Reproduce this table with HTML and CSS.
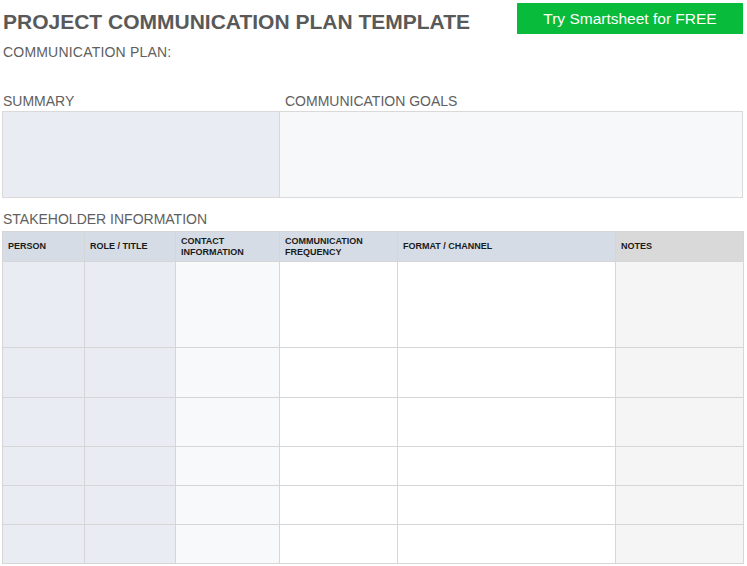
FILE: index.html
```html
<!DOCTYPE html>
<html>
<head>
<meta charset="utf-8">
<link rel="stylesheet" href="styles.css">
</head>
<body>
<div class="page">
  <header class="top">
    <h1 class="title">PROJECT COMMUNICATION PLAN TEMPLATE</h1>
    <a class="cta">Try Smartsheet for FREE</a>
  </header>
  <div class="subtitle">COMMUNICATION PLAN:</div>

  <div class="labels">
    <div class="label">SUMMARY</div>
    <div class="label">COMMUNICATION GOALS</div>
  </div>
  <div class="boxes">
    <div class="box box-summary"></div>
    <div class="box box-goals"></div>
  </div>

  <div class="label stake">STAKEHOLDER INFORMATION</div>
  <table class="grid">
    <colgroup>
      <col class="c1"><col class="c2"><col class="c3"><col class="c4"><col class="c5"><col class="c6">
    </colgroup>
    <thead>
      <tr>
        <th>PERSON</th>
        <th>ROLE / TITLE</th>
        <th>CONTACT<br>INFORMATION</th>
        <th>COMMUNICATION<br>FREQUENCY</th>
        <th>FORMAT / CHANNEL</th>
        <th class="notes-h">NOTES</th>
      </tr>
    </thead>
    <tbody>
      <tr class="r1"><td class="blue"></td><td class="blue"></td><td class="pale"></td><td></td><td></td><td class="notes"></td></tr>
      <tr class="r2"><td class="blue"></td><td class="blue"></td><td class="pale"></td><td></td><td></td><td class="notes"></td></tr>
      <tr class="r3"><td class="blue"></td><td class="blue"></td><td class="pale"></td><td></td><td></td><td class="notes"></td></tr>
      <tr class="r4"><td class="blue"></td><td class="blue"></td><td class="pale"></td><td></td><td></td><td class="notes"></td></tr>
      <tr class="r4"><td class="blue"></td><td class="blue"></td><td class="pale"></td><td></td><td></td><td class="notes"></td></tr>
      <tr class="r4"><td class="blue"></td><td class="blue"></td><td class="pale"></td><td></td><td></td><td class="notes"></td></tr>
    </tbody>
  </table>
</div>
</body>
</html>
```

FILE: styles.css
```css
* { box-sizing: border-box; }
html, body { margin: 0; padding: 0; background: #fff; }
body { font-family: "Liberation Sans", Arial, sans-serif; color: #595959; }
.page { width: 747px; padding: 0 4px 0 2px; }

.top {
  display: flex;
  justify-content: space-between;
  align-items: flex-start;
  height: 38px;
  padding-top: 3px;
}
.title {
  margin: 2px 0 0 0;
  padding-left: 1px;
  font-size: 21px;
  line-height: 33px;
  font-weight: bold;
  color: #595959;
}
.cta {
  display: flex;
  align-items: center;
  justify-content: center;
  width: 226px;
  height: 31px;
  background: #08bb3a;
  color: #fff;
  font-size: 15.5px;
  text-decoration: none;
}
.subtitle {
  margin-top: 6px;
  padding-left: 1px;
  font-size: 14px;
  line-height: 16px;
  color: #606060;
  letter-spacing: 0.2px;
}
.labels {
  display: grid;
  grid-template-columns: 282px 1fr;
  margin-top: 33px;
}
.label {
  font-size: 14px;
  line-height: 17px;
  color: #606060;
  padding-left: 1px;
}
.boxes {
  display: grid;
  grid-template-columns: 278px 1fr;
  height: 87px;
  margin-top: 1px;
}
.box { border: 1px solid #d9d9d9; }
.box-summary { background: #e9ecf3; }
.box-goals { background: #f7f8fa; border-left: none; }

.stake { margin-top: 13px; height: 20px; }

.grid {
  border-collapse: collapse;
  table-layout: fixed;
  width: 741px;
}
.c1 { width: 82px; }
.c2 { width: 91px; }
.c3 { width: 104px; }
.c4 { width: 118px; }
.c5 { width: 218px; }
.c6 { width: 128px; }
.grid th, .grid td { border: 1px solid #d6d6d6; padding: 0; }
.grid th {
  height: 30px;
  background: #d6dce5;
  color: #1a1a1a;
  font-size: 9px;
  line-height: 11px;
  font-weight: bold;
  text-align: left;
  padding-left: 5px;
  vertical-align: middle;
}
.grid th.notes-h { background: #d9d9d9; }
.r1 td { height: 86px; }
.r2 td { height: 50px; }
.r3 td { height: 49px; }
.r4 td { height: 39px; }
.blue { background: #e9ecf3; }
.pale { background: #f8f9fb; }
.notes { background: #f5f5f5; }
```
